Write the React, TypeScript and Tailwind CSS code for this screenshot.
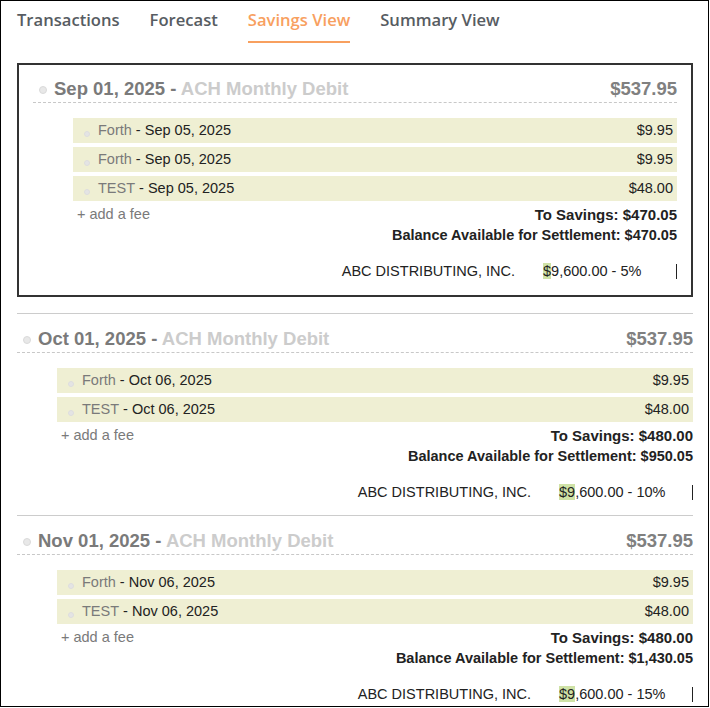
import React from 'react';

type Fee = { name: string; date: string; amount: string };

type Period = {
  date: string;
  amount: string;
  fees: Fee[];
  toSavings: string;
  balance: string;
  highlight: string;
  rest: string;
  selected?: boolean;
};

const periods: Period[] = [
  {
    date: 'Sep 01, 2025',
    amount: '$537.95',
    fees: [
      { name: 'Forth', date: 'Sep 05, 2025', amount: '$9.95' },
      { name: 'Forth', date: 'Sep 05, 2025', amount: '$9.95' },
      { name: 'TEST', date: 'Sep 05, 2025', amount: '$48.00' },
    ],
    toSavings: '$470.05',
    balance: '$470.05',
    highlight: '$',
    rest: '9,600.00 - 5%',
    selected: true,
  },
  {
    date: 'Oct 01, 2025',
    amount: '$537.95',
    fees: [
      { name: 'Forth', date: 'Oct 06, 2025', amount: '$9.95' },
      { name: 'TEST', date: 'Oct 06, 2025', amount: '$48.00' },
    ],
    toSavings: '$480.00',
    balance: '$950.05',
    highlight: '$9',
    rest: ',600.00 - 10%',
  },
  {
    date: 'Nov 01, 2025',
    amount: '$537.95',
    fees: [
      { name: 'Forth', date: 'Nov 06, 2025', amount: '$9.95' },
      { name: 'TEST', date: 'Nov 06, 2025', amount: '$48.00' },
    ],
    toSavings: '$480.00',
    balance: '$1,430.05',
    highlight: '$9',
    rest: ',600.00 - 15%',
  },
];

const tabs = ['Transactions', 'Forecast', 'Savings View', 'Summary View'];

function PeriodCard({ p }: { p: Period }) {
  const wrap = p.selected
    ? 'border-2 border-[#333] pl-[14px] pr-[14px] mb-[16px] pb-[14px] pt-[13px]'
    : 'border-t border-[#ccc] pb-[13px] pt-[14px]';

  return (
    <div className={wrap}>
      {/* period header */}
      <div className="flex items-center border-b border-dashed border-[#c8c8c8] pb-[3px] text-[18.5px] leading-[21px] font-bold">
        <span className="ml-[6px] mt-[3px] w-[8px] h-[8px] rounded-full bg-[#e8e8e8] border border-[#dadada] shrink-0" />
        <span className="ml-[7px] text-[#7a7a7a]">
          {p.date} - <span className="text-[#cccccc]">ACH Monthly Debit</span>
        </span>
        <span className="ml-auto text-[#808080]">{p.amount}</span>
      </div>

      {/* fees */}
      <div className="ml-[40px] mt-[15px] flex flex-col gap-[4px]">
        {p.fees.map((f, i) => (
          <div key={i} className="h-[25px] bg-[#efefd3] flex items-center pl-[11px] pr-[4px] text-[14.5px]">
            <span className="mt-[7px] w-[6px] h-[6px] rounded-full bg-[#e4e4e4] border border-[#dedede] shrink-0" />
            <span className="ml-[8px] text-[#7a7a7a]">{f.name}</span>
            <span className="text-[#222]">&nbsp;- {f.date}</span>
            <span className="ml-auto text-[#222]">{f.amount}</span>
          </div>
        ))}
      </div>

      {/* totals */}
      <div className="mt-[3px] flex text-[14.5px] leading-[21px]">
        <span className="ml-[44px] text-[#7a7a7a]">+ add a fee</span>
        <div className="ml-auto flex flex-col items-end font-bold text-[#222]">
          <span className="text-[15px]">To Savings: {p.toSavings}</span>
          <span>Balance Available for Settlement: {p.balance}</span>
        </div>
      </div>

      {/* company split */}
      <div className="mt-[15px] flex items-center justify-end text-[14.5px] leading-[20px] text-[#222]">
        <span>ABC DISTRIBUTING, INC.</span>
        <span className="ml-[28px] w-[133px]">
          <span className="bg-[#cfe2a6]">{p.highlight}</span>
          {p.rest}
        </span>
        <span className="w-px h-[15px] bg-[#222]" />
      </div>
    </div>
  );
}

export default function App() {
  return (
    <div className="w-[709px] h-[707px] border border-black overflow-hidden bg-white font-['Liberation_Sans',Arial,sans-serif]">
      <div className="pl-[16px] pr-[15px]">
        <div className="flex gap-[30px] pt-[7px] font-['Open_Sans',sans-serif] font-semibold text-[16.6px] leading-[24px]">
          {tabs.map((t) => (
            <div
              key={t}
              className={
                t === 'Savings View'
                  ? 'pb-[9px] border-b-2 border-[#f8a05f] text-[#f8a05f]'
                  : 'pb-[9px] border-b-2 border-transparent text-[#575c62]'
              }
            >
              {t}
            </div>
          ))}
        </div>

        <div className="mt-[20px]">
          {periods.map((p, i) => (
            <PeriodCard key={i} p={p} />
          ))}
        </div>
      </div>
    </div>
  );
}
